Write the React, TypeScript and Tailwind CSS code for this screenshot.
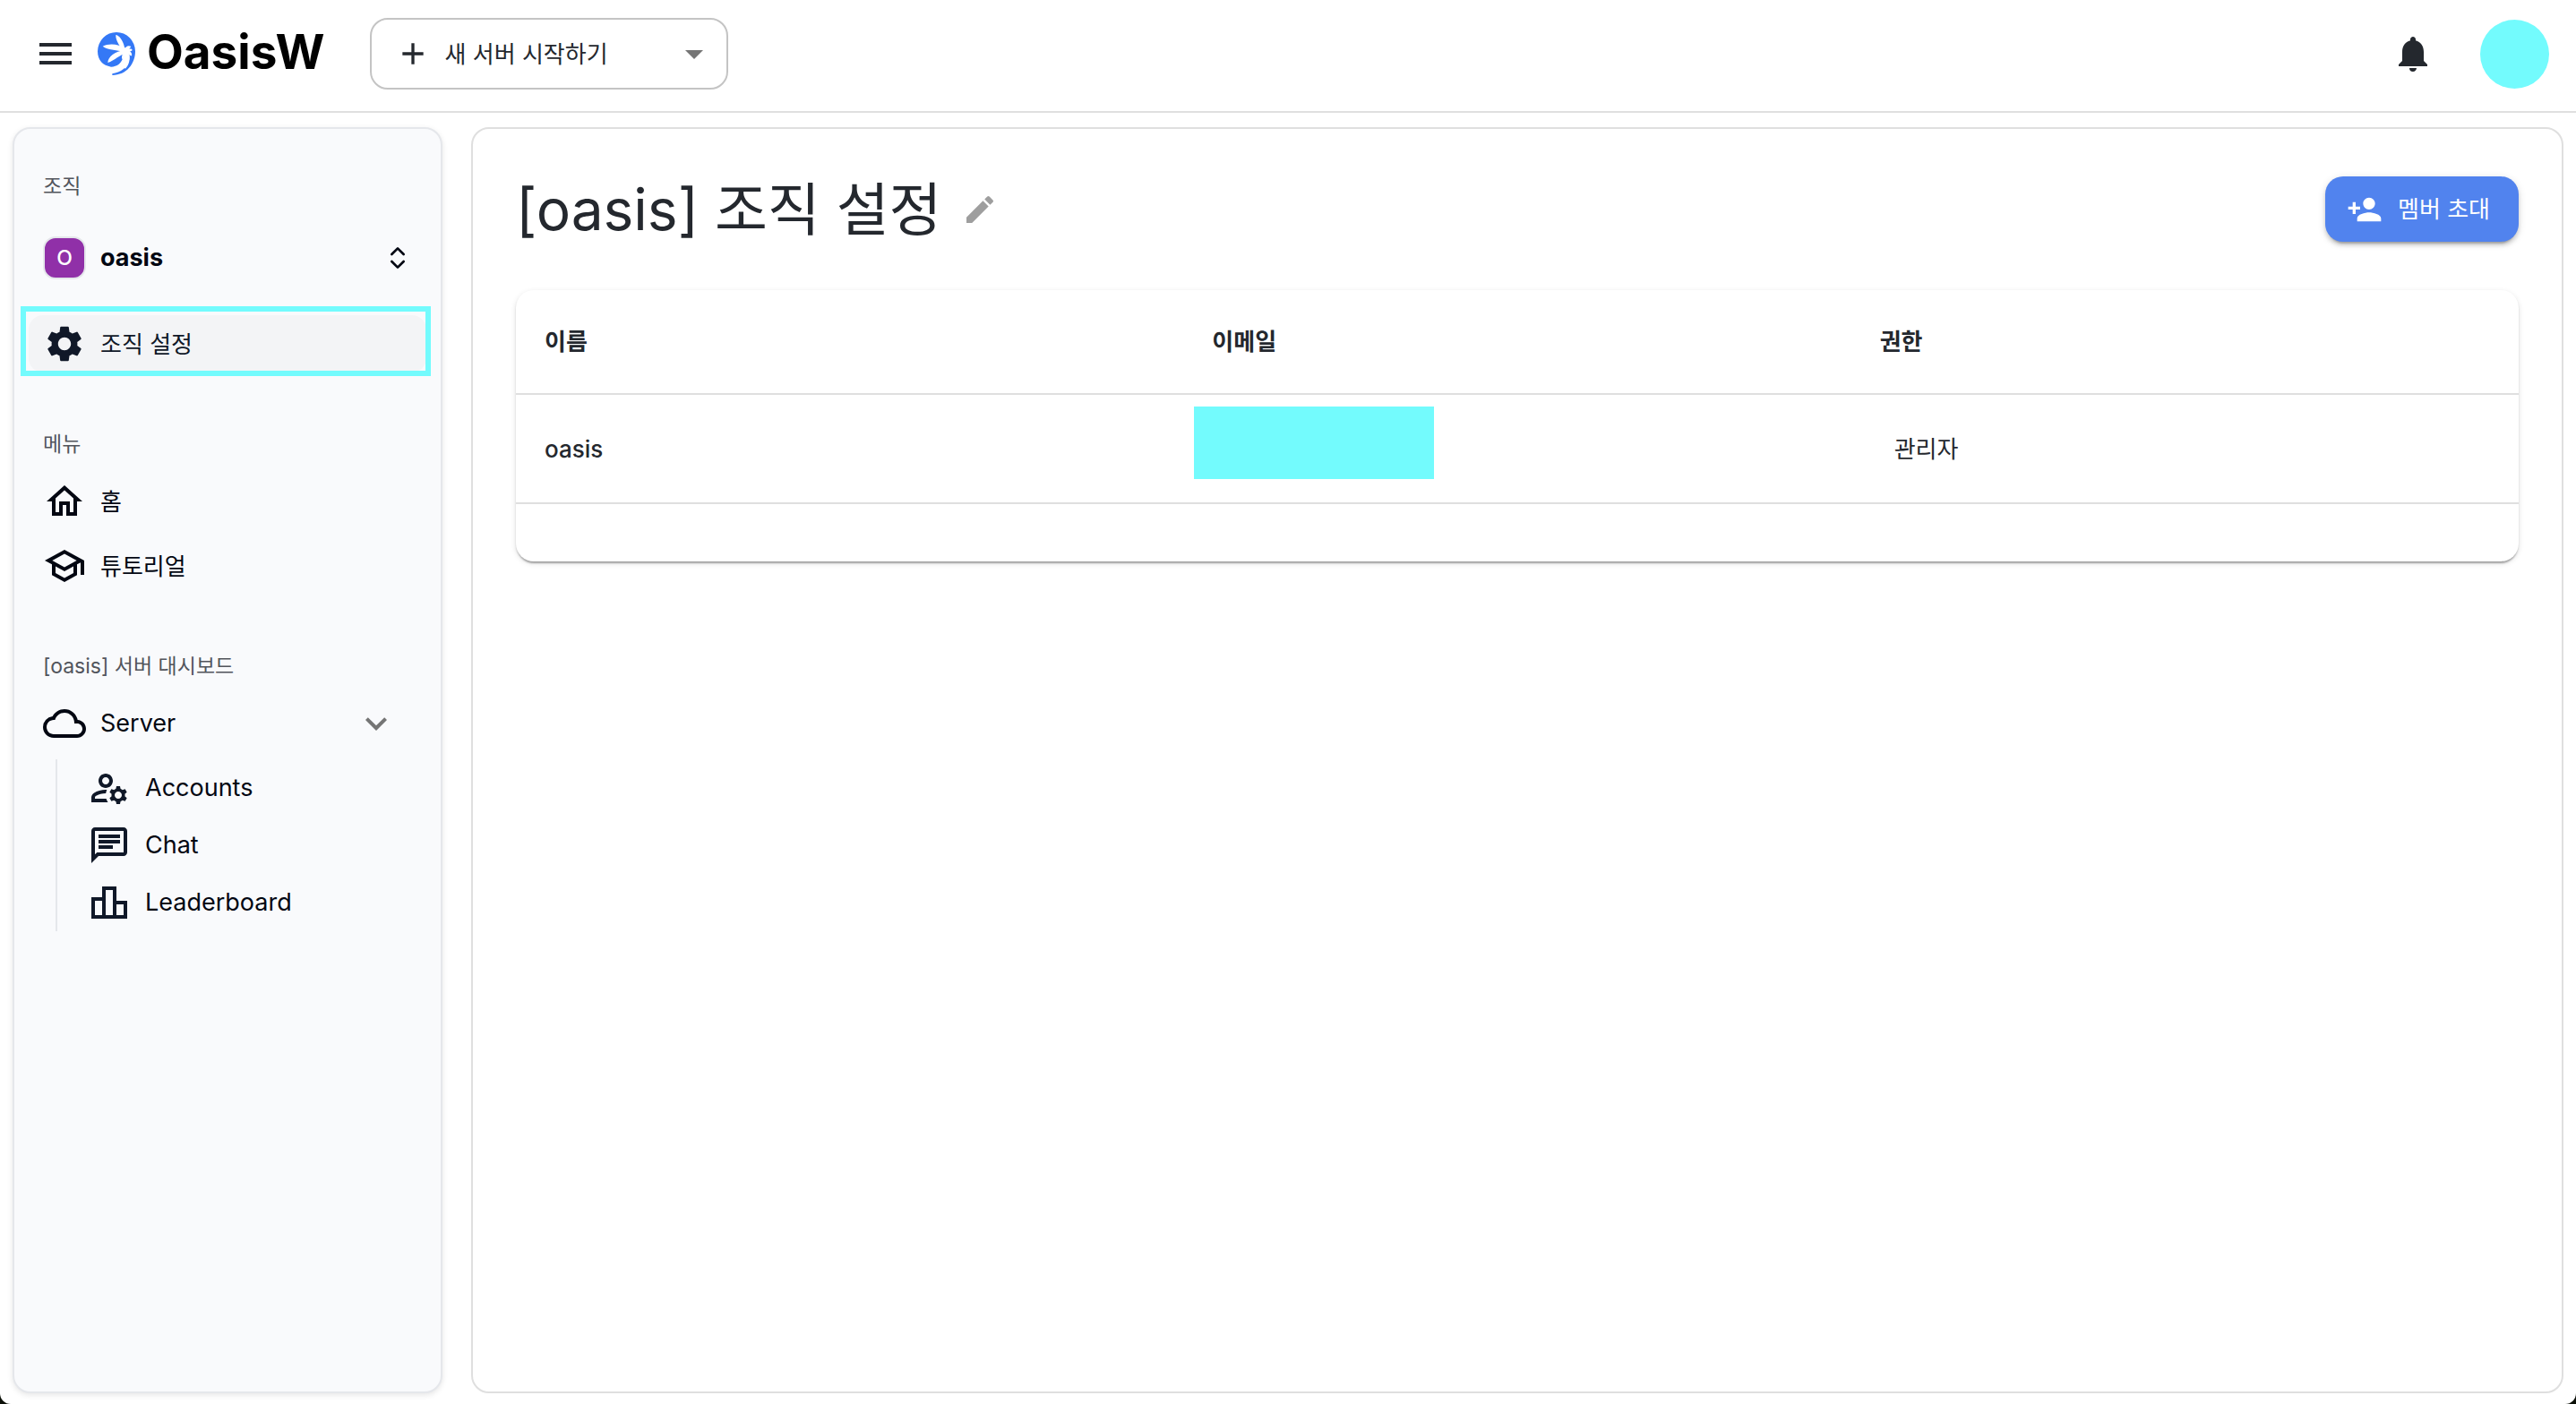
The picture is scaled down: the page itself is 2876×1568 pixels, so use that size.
import type { ReactNode } from "react";
import {
  MdAdd,
  MdArrowDropDown,
  MdCloudQueue,
  MdEdit,
  MdExpandMore,
  MdMenu,
  MdNotifications,
  MdOutlineChat,
  MdOutlineHome,
  MdOutlineLeaderboard,
  MdOutlineManageAccounts,
  MdOutlineSchool,
  MdPersonAdd,
  MdSettings,
} from "react-icons/md";
import { ChevronsUpDown } from "lucide-react";

function PalmMark() {
  return (
    <svg viewBox="324 105 132 150" className="h-[50px] w-11" aria-hidden="true">
      <path
        fill="#3478f6"
        d="M327 172A63 64 0 0 1 453 172C453 212 425 252 376 252L376 247C402 243 432 226 433 196L413 190C408 212 392 224 372 224C345 220 327 202 327 172Z"
      />
      <g fill="#fff">
        <path d="M388 117C398 118 412 134 417 158L426 168L414 172C404 160 386 134 388 117Z" />
        <path d="M344 155C364 144 398 146 420 163L424 174L410 173C388 166 362 168 344 155Z" />
        <path d="M361 210C362 190 384 172 418 168L424 178C402 182 384 204 361 210Z" />
        <path d="M416 166C420 156 430 150 439 156C436 160 434 162 433 164C438 163 442 164 443 168C440 171 438 172 435 172C440 176 443 182 441 187C437 187 434 184 431 182C434 190 434 200 430 207C424 202 422 192 421 184C418 190 414 196 408 198C407 190 410 178 416 172Z" />
        <path d="M416 180L434 184C436 208 428 222 420 230L404 216C412 208 416 194 416 180Z" />
      </g>
    </svg>
  );
}

function SectionTitle({ children }: { children: ReactNode }) {
  return (
    <h2 className="flex h-12 items-center pl-4 text-[23px] text-[#52555c]">
      {children}
    </h2>
  );
}

function NavItem({ icon, label }: { icon: ReactNode; label: string }) {
  return (
    <a href="#" className="flex h-16 items-center gap-4 pl-4 text-[26px] text-gray-950">
      {icon}
      {label}
    </a>
  );
}

function SubItem({ icon, label }: { icon: ReactNode; label: string }) {
  return (
    <li>
      <a href="#" className="flex h-16 items-center gap-4 pl-[34px] text-[27px] text-gray-950">
        <span className="text-gray-900">{icon}</span>
        {label}
      </a>
    </li>
  );
}

function Header() {
  return (
    <header className="flex h-[126px] items-center border-b-2 border-[#dfdfdf] pr-[30px] pl-[38px] pb-1">
      <button type="button" aria-label="menu">
        <MdMenu className="size-12" />
      </button>
      <a href="#" className="ml-[22px] flex items-center gap-3 text-[53px] leading-none font-bold text-black">
        <PalmMark />
        <span className="pb-1">OasisW</span>
      </a>
      <div className="relative ml-[50px] h-20 w-[400px] rounded-[20px] border-2 border-[#c4c4c4]">
        <MdAdd className="pointer-events-none absolute top-[18px] left-[26px] size-10" />
        <select
          aria-label="서버"
          className="size-full appearance-none rounded-[18px] bg-transparent pl-[82px] text-[26px]"
        >
          <option>새 서버 시작하기</option>
        </select>
        <MdArrowDropDown className="pointer-events-none absolute top-[14px] right-[12px] size-12 text-[#757575]" />
      </div>
      <div className="ml-auto flex items-center gap-[51px]">
        <button type="button" aria-label="notifications">
          <MdNotifications className="size-12" />
        </button>
        <button type="button" aria-label="account" className="size-[77px] rounded-full bg-[#73fbfd]" />
      </div>
    </header>
  );
}

function Sidebar() {
  return (
    <aside className="w-[480px] shrink-0 rounded-[20px] border-2 border-gray-200 bg-[#f9fafc] px-4 pt-10 shadow-[0_2px_6px_rgba(0,0,0,0.1)]">
      <SectionTitle>조직</SectionTitle>
      <button type="button" className="mt-6 flex h-16 w-full items-center gap-4 pr-4 pl-4 text-[27px] font-bold text-gray-950">
        <span className="flex size-12 items-center justify-center rounded-[14px] border-2 border-gray-200 bg-[#9030a8] text-[23px] font-medium text-white">
          O
        </span>
        oasis
        <ChevronsUpDown className="ml-auto size-8" />
      </button>
      <a
        href="#"
        aria-current="page"
        className="relative mt-8 flex h-16 items-center gap-4 rounded-[16px] bg-gray-100 pl-4 text-[26px] text-gray-900"
      >
        <MdSettings className="size-12" />
        조직 설정
        <span className="absolute -top-[10px] -right-[5px] -bottom-1 -left-[9px] border-[6px] border-[#73fbfd]" />
      </a>
      <div className="mt-14">
        <SectionTitle>메뉴</SectionTitle>
      </div>
      <nav className="mt-2 flex flex-col gap-2">
        <NavItem icon={<MdOutlineHome className="size-12" />} label="홈" />
        <NavItem icon={<MdOutlineSchool className="size-12" />} label="튜토리얼" />
      </nav>
      <div className="mt-14">
        <SectionTitle>[oasis] 서버 대시보드</SectionTitle>
      </div>
      <button type="button" aria-expanded="true" className="mt-2 flex h-16 w-full items-center gap-4 pr-8 pl-4 text-[27px] text-gray-950">
        <MdCloudQueue className="size-12" />
        Server
        <MdExpandMore className="ml-auto size-12 text-[#757575]" />
      </button>
      <ul className="mt-2 ml-[30px] border-l-2 border-gray-200">
        <SubItem icon={<MdOutlineManageAccounts className="size-12" />} label="Accounts" />
        <SubItem icon={<MdOutlineChat className="size-12" />} label="Chat" />
        <SubItem icon={<MdOutlineLeaderboard className="size-12" />} label="Leaderboard" />
      </ul>
    </aside>
  );
}

function MembersTable() {
  return (
    <div className="mt-[54px] rounded-[20px] pb-16 shadow-[0_4px_2px_-2px_rgba(0,0,0,0.2),0_2px_2px_rgba(0,0,0,0.14),0_2px_6px_rgba(0,0,0,0.12)]">
      <table className="w-full table-fixed border-collapse text-left">
        <thead>
          <tr className="h-[116px] border-b-2 border-[#dfdfdf] text-[26px]">
            <th className="px-8 font-bold">이름</th>
            <th className="px-8 font-bold">이메일</th>
            <th className="px-8 font-bold">권한</th>
          </tr>
        </thead>
        <tbody>
          <tr className="h-[122px] border-b-2 border-[#dfdfdf]">
            <td className="px-8 text-[26px] font-medium">oasis</td>
            <td className="px-3 pt-[13px] align-top">
              <div className="h-[81px] w-[268px] bg-[#73fbfd]" />
            </td>
            <td className="px-12 text-[26px]">관리자</td>
          </tr>
        </tbody>
      </table>
    </div>
  );
}

export default function App() {
  return (
    <div className="bg-[#0c1008] text-[#24282e]">
      <div className="flex min-h-screen flex-col rounded-b-[12px] bg-white font-['Inter','Noto_Sans_CJK_KR',sans-serif]">
        <Header />
        <div className="flex flex-1 gap-8 px-[14px] pt-4 pb-3">
          <Sidebar />
          <main className="min-w-0 flex-1 rounded-[20px] border-2 border-[#dfdfdf] px-12 pt-[53px]">
            <div className="flex h-[73px] items-center">
              <h1 className="text-[64px] leading-[73px]">[oasis] 조직 설정</h1>
              <button type="button" aria-label="edit" className="ml-[22px] text-[#9e9e9e]">
                <MdEdit className="size-10" />
              </button>
              <button
                type="button"
                className="ml-auto flex h-[73px] items-center gap-[17px] rounded-[20px] bg-[#5183ee] pr-8 pl-6 text-[26px] text-white shadow-[0_6px_2px_-4px_rgba(0,0,0,0.2),0_4px_4px_rgba(0,0,0,0.14),0_2px_10px_rgba(0,0,0,0.12)]"
              >
                <MdPersonAdd className="size-10" />
                멤버 초대
              </button>
            </div>
            <MembersTable />
          </main>
        </div>
      </div>
    </div>
  );
}
